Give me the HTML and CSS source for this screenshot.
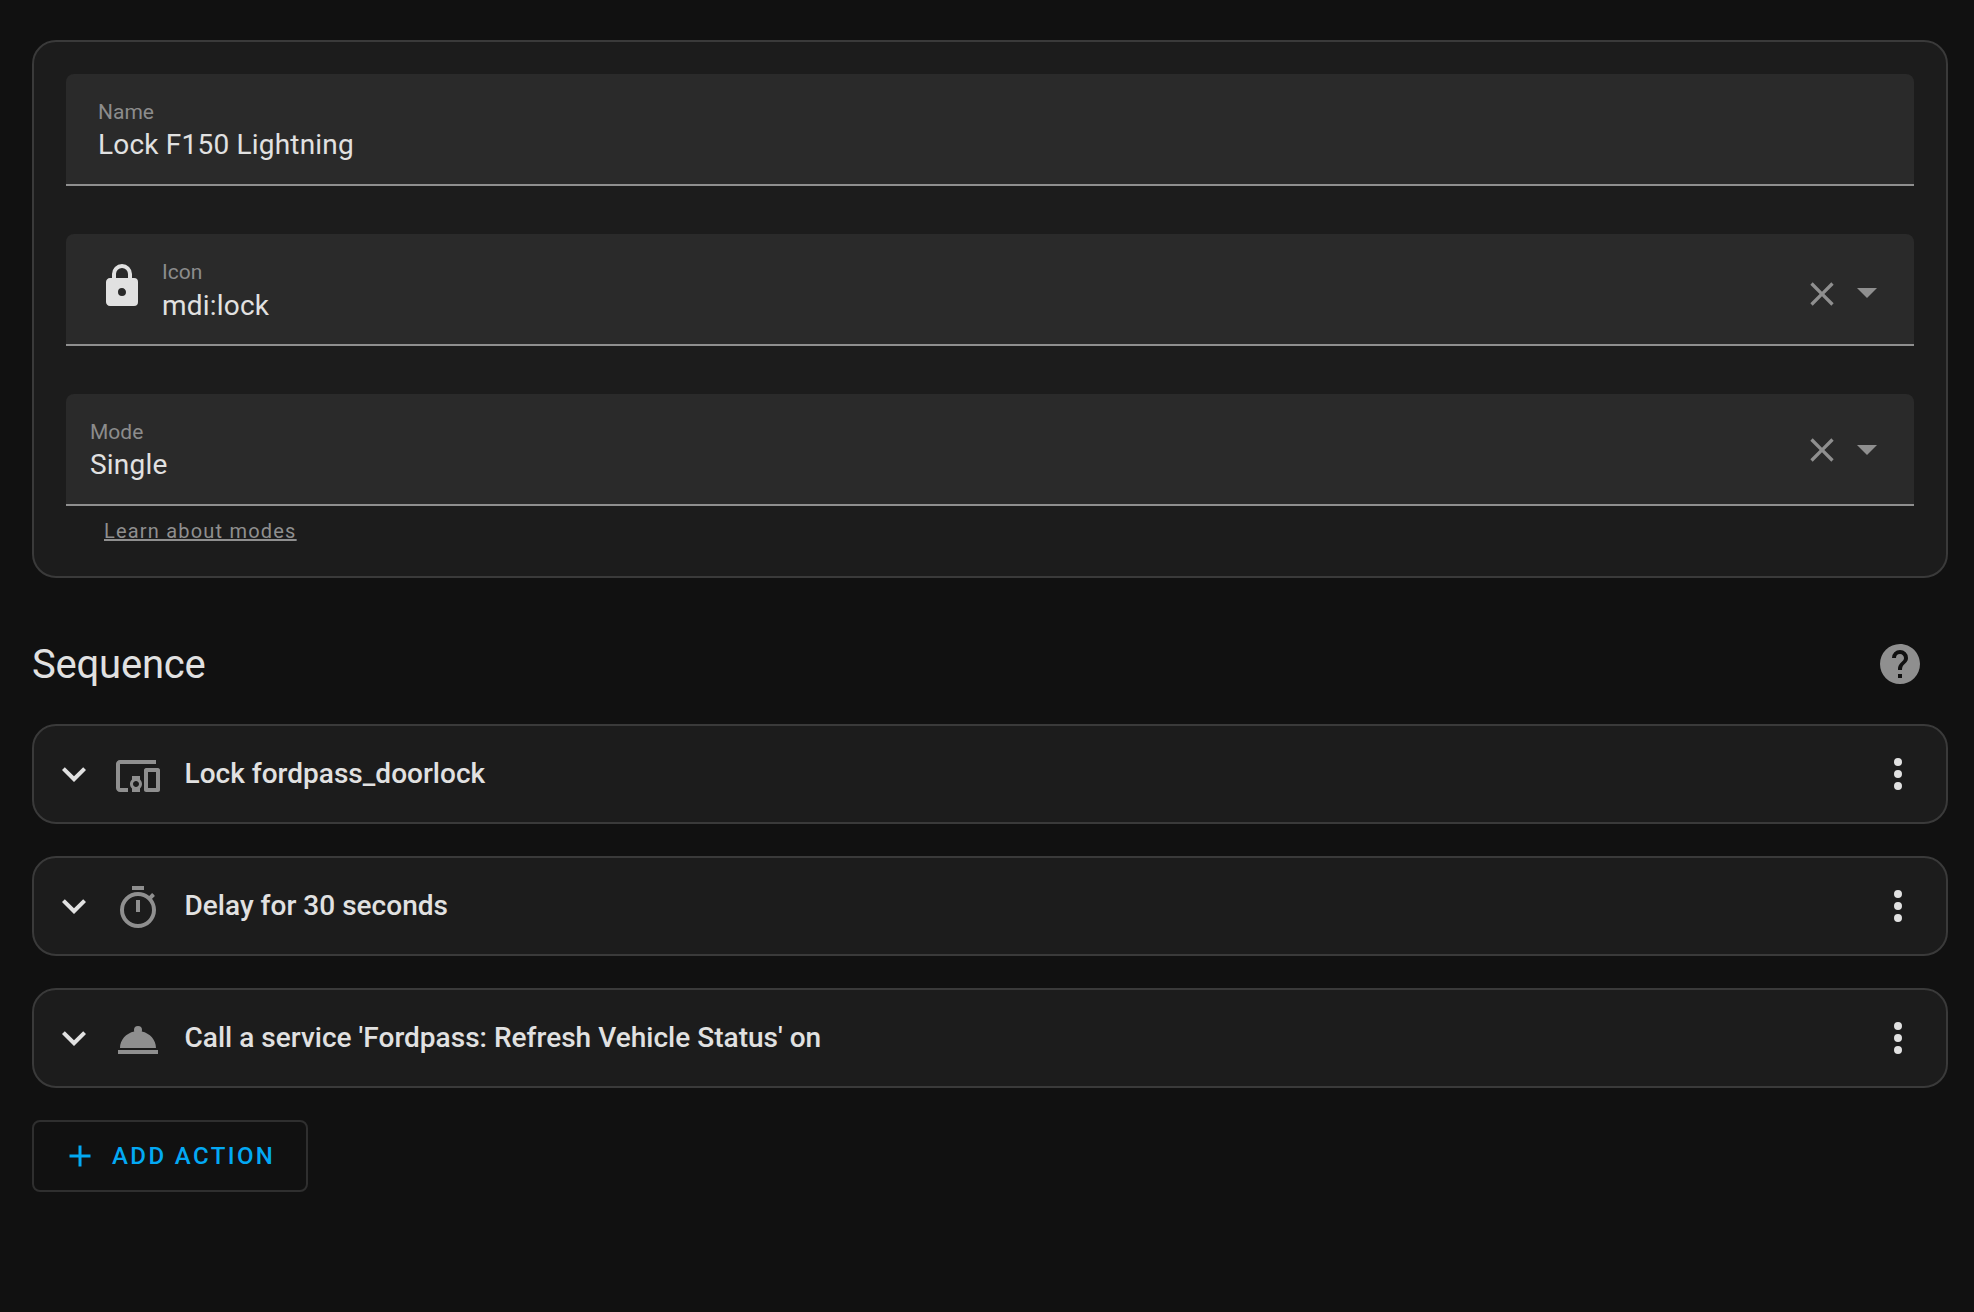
FILE: index.html
```html
<!DOCTYPE html>
<html lang="en">
<head>
<meta charset="utf-8">
<title>Lock F150 Lightning</title>
<link rel="stylesheet" href="styles.css">
</head>
<body>
<main class="page">
  <section class="card">
    <div class="field">
      <div class="field-text">
        <span class="label">Name</span>
        <span class="value">Lock F150 Lightning</span>
      </div>
    </div>
    <div class="field field-icon">
      <svg class="icon icon-lock" viewBox="0 0 24 24"><path d="M12,17A2,2 0 0,0 14,15C14,13.89 13.1,13 12,13A2,2 0 0,0 10,15A2,2 0 0,0 12,17M18,8A2,2 0 0,1 20,10V20A2,2 0 0,1 18,22H6C4.89,22 4,21.1 4,20V10C4,8.89 4.9,8 6,8H7V6A5,5 0 0,1 12,1A5,5 0 0,1 17,6V8H18M12,3A3,3 0 0,0 9,6V8H15V6A3,3 0 0,0 12,3Z"/></svg>
      <div class="field-text shift-up">
        <span class="label">Icon</span>
        <span class="value value-low">mdi:lock</span>
      </div>
      <div class="field-tools tools-low">
        <svg class="icon-clear" viewBox="0 0 24 24"><path d="M19,6.41L17.59,5L12,10.59L6.41,5L5,6.41L10.59,12L5,17.59L6.41,19L12,13.41L17.59,19L19,17.59L13.41,12L19,6.41Z"/></svg>
        <span class="arrow"></span>
      </div>
    </div>
    <div class="field field-mode">
      <div class="field-text">
        <span class="label">Mode</span>
        <span class="value">Single</span>
      </div>
      <div class="field-tools">
        <svg class="icon-clear" viewBox="0 0 24 24"><path d="M19,6.41L17.59,5L12,10.59L6.41,5L5,6.41L10.59,12L5,17.59L6.41,19L12,13.41L17.59,19L19,17.59L13.41,12L19,6.41Z"/></svg>
        <span class="arrow arrow-low"></span>
      </div>
    </div>
    <div class="helper"><a href="#">Learn about modes</a></div>
  </section>

  <header class="section-head">
    <h2>Sequence</h2>
    <svg class="icon icon-help" viewBox="0 0 24 24"><path d="M15.07,11.25L14.17,12.17C13.45,12.89 13,13.5 13,15H11V14.5C11,13.39 11.45,12.39 12.17,11.67L13.41,10.41C13.78,10.05 14,9.55 14,9C14,7.89 13.1,7 12,7A2,2 0 0,0 10,9H8A4,4 0 0,1 12,5A4,4 0 0,1 16,9C16,9.88 15.64,10.67 15.07,11.25M13,19H11V17H13M12,2A10,10 0 0,0 2,12A10,10 0 0,0 12,22A10,10 0 0,0 22,12C22,6.47 17.5,2 12,2Z"/></svg>
  </header>

  <div class="rows">
    <div class="row">
      <svg class="icon icon-chevron" viewBox="0 0 24 24"><path d="M7.41,8.58L12,13.17L16.59,8.58L18,10L12,16L6,10L7.41,8.58Z"/></svg>
      <svg class="icon icon-type" viewBox="0 0 24 24"><path d="M3 6H21V4H3C1.9 4 1 4.9 1 6V18C1 19.1 1.9 20 3 20H7V18H3V6M13 12H9V13.78C8.39 14.33 8 15.11 8 16C8 16.89 8.39 17.67 9 18.22V20H13V18.22C13.61 17.67 14 16.88 14 16S13.61 14.33 13 13.78V12M11 17.5C10.17 17.5 9.5 16.83 9.5 16S10.17 14.5 11 14.5 12.5 15.17 12.5 16 11.83 17.5 11 17.5M22 8H16C15.5 8 15 8.5 15 9V19C15 19.5 15.5 20 16 20H22C22.5 20 23 19.5 23 19V9C23 8.5 22.5 8 22 8M21 18H17V10H21V18Z"/></svg>
      <span class="row-title">Lock fordpass_doorlock</span>
      <svg class="icon icon-menu" viewBox="0 0 24 24"><path d="M12,16A2,2 0 0,1 14,18A2,2 0 0,1 12,20A2,2 0 0,1 10,18A2,2 0 0,1 12,16M12,10A2,2 0 0,1 14,12A2,2 0 0,1 12,14A2,2 0 0,1 10,12A2,2 0 0,1 12,10M12,4A2,2 0 0,1 14,6A2,2 0 0,1 12,8A2,2 0 0,1 10,6A2,2 0 0,1 12,4Z"/></svg>
    </div>
    <div class="row">
      <svg class="icon icon-chevron" viewBox="0 0 24 24"><path d="M7.41,8.58L12,13.17L16.59,8.58L18,10L12,16L6,10L7.41,8.58Z"/></svg>
      <svg class="icon icon-type" viewBox="0 0 24 24"><path d="M12,20A7,7 0 0,1 5,13A7,7 0 0,1 12,6A7,7 0 0,1 19,13A7,7 0 0,1 12,20M19.03,7.39L20.45,5.97C20,5.46 19.55,5 19.04,4.56L17.62,6C16.07,4.74 14.12,4 12,4A9,9 0 0,0 3,13A9,9 0 0,0 12,22C17,22 21,17.97 21,13C21,10.88 20.26,8.93 19.03,7.39M11,14H13V8H11M15,1H9V3H15V1Z"/></svg>
      <span class="row-title">Delay for 30 seconds</span>
      <svg class="icon icon-menu" viewBox="0 0 24 24"><path d="M12,16A2,2 0 0,1 14,18A2,2 0 0,1 12,20A2,2 0 0,1 10,18A2,2 0 0,1 12,16M12,10A2,2 0 0,1 14,12A2,2 0 0,1 12,14A2,2 0 0,1 10,12A2,2 0 0,1 12,10M12,4A2,2 0 0,1 14,6A2,2 0 0,1 12,8A2,2 0 0,1 10,6A2,2 0 0,1 12,4Z"/></svg>
    </div>
    <div class="row">
      <svg class="icon icon-chevron" viewBox="0 0 24 24"><path d="M7.41,8.58L12,13.17L16.59,8.58L18,10L12,16L6,10L7.41,8.58Z"/></svg>
      <svg class="icon icon-type" viewBox="0 0 24 24"><path d="M12,5A2,2 0 0,1 14,7C14,7.24 13.96,7.47 13.88,7.69C17.95,8.5 21,11.91 21,16H3C3,11.91 6.05,8.5 10.12,7.69C10.04,7.47 10,7.24 10,7A2,2 0 0,1 12,5M22,19H2V17H22V19Z"/></svg>
      <span class="row-title">Call a service 'Fordpass: Refresh Vehicle Status' on</span>
      <svg class="icon icon-menu" viewBox="0 0 24 24"><path d="M12,16A2,2 0 0,1 14,18A2,2 0 0,1 12,20A2,2 0 0,1 10,18A2,2 0 0,1 12,16M12,10A2,2 0 0,1 14,12A2,2 0 0,1 12,14A2,2 0 0,1 10,12A2,2 0 0,1 12,10M12,4A2,2 0 0,1 14,6A2,2 0 0,1 12,8A2,2 0 0,1 10,6A2,2 0 0,1 12,4Z"/></svg>
    </div>
  </div>

  <button class="add-btn" type="button">
    <svg class="icon-plus" viewBox="0 0 24 24"><path d="M19,13H13V19H11V13H5V11H11V5H13V11H19V13Z"/></svg>
    <span>ADD ACTION</span>
  </button>
</main>
</body>
</html>
```

FILE: styles.css
```css
* { box-sizing: border-box; }
html, body { margin: 0; height: 100%; }
body {
  background: #111111;
  color: #e1e1e1;
  font-family: Roboto, "Liberation Sans", sans-serif;
  overflow: hidden;
}
.page { padding: 40px 26px 0 32px; }
.card {
  background: #1c1c1c;
  border: 2px solid #3a3a3a;
  border-radius: 24px;
  padding: 32px 32px 32px;
  height: 538px;
}
.field {
  position: relative;
  display: flex;
  align-items: flex-start;
  height: 112px;
  margin-bottom: 48px;
  padding: 25px 32px 0;
  background: #2a2a2a;
  border-bottom: 2px solid #8f8f8f;
  border-radius: 8px 8px 0 0;
}
.field-mode { margin-bottom: 0; padding-left: 24px; }
.field-icon { padding-top: 28px; }
.field-text { display: flex; flex-direction: column; flex: 1; }
.shift-up { margin-top: -3px; margin-left: 16px; }
.label {
  color: #8c8c8c;
  font-size: 21px;
  line-height: 26px;
}
.value {
  color: #e1e1e1;
  font-size: 28px;
  line-height: 38px;
  letter-spacing: 0.2px;
  margin-top: 1px;
}
.value-low { margin-top: 2px; }
.icon { width: 48px; height: 48px; flex: none; display: block; }
.icon-lock { fill: #e1e1e1; }
.field-tools {
  display: flex;
  align-items: center;
  height: 40px;
  margin-top: 11px;
  margin-right: 5px;
}
.tools-low { margin-top: 12px; }
.icon-clear { width: 40px; height: 40px; fill: #8f8f8f; display: block; }
.arrow {
  width: 0;
  height: 0;
  margin: -2px 0 0 15px;
  border-left: 10px solid transparent;
  border-right: 10px solid transparent;
  border-top: 10px solid #8f8f8f;
}
.arrow-low { margin-top: 0; }
.helper { padding: 14px 0 0 38px; font-size: 20px; line-height: 23px; letter-spacing: 1.2px; }
.helper a { color: #8f8f8f; }
.section-head {
  display: flex;
  align-items: center;
  justify-content: space-between;
  height: 48px;
  margin-top: 62px;
  padding-right: 24px;
}
.section-head h2 {
  margin: 0;
  font-size: 40px;
  font-weight: 400;
  letter-spacing: -0.2px;
  color: #e1e1e1;
}
.icon-help { fill: #8f8f8f; }
.rows { display: flex; flex-direction: column; gap: 32px; margin-top: 36px; }
.row {
  display: flex;
  align-items: center;
  height: 100px;
  padding: 0 24px 0 16px;
  background: #1c1c1c;
  border: 2px solid #3a3a3a;
  border-radius: 24px;
}
.icon-chevron { fill: #e1e1e1; }
.icon-type { fill: #8f8f8f; margin: 4px 0 0 16px; }
.row-title {
  flex: 1;
  margin: 0 0 2px 22.5px;
  font-size: 28px;
  font-weight: 500;
  letter-spacing: 0.02px;
  color: #e1e1e1;
}
.icon-menu { fill: #e1e1e1; }
.add-btn {
  display: flex;
  align-items: center;
  width: 276px;
  height: 72px;
  margin-top: 32px;
  padding: 0 0 0 28px;
  background: transparent;
  border: 2px solid #2f2f2f;
  border-radius: 8px;
  color: #03a9f4;
  font-family: Roboto, "Liberation Sans", sans-serif;
  font-size: 24px;
  font-weight: 500;
  letter-spacing: 2.4px;
}
.icon-plus { width: 36px; height: 36px; fill: #03a9f4; margin-right: 14px; }
```
